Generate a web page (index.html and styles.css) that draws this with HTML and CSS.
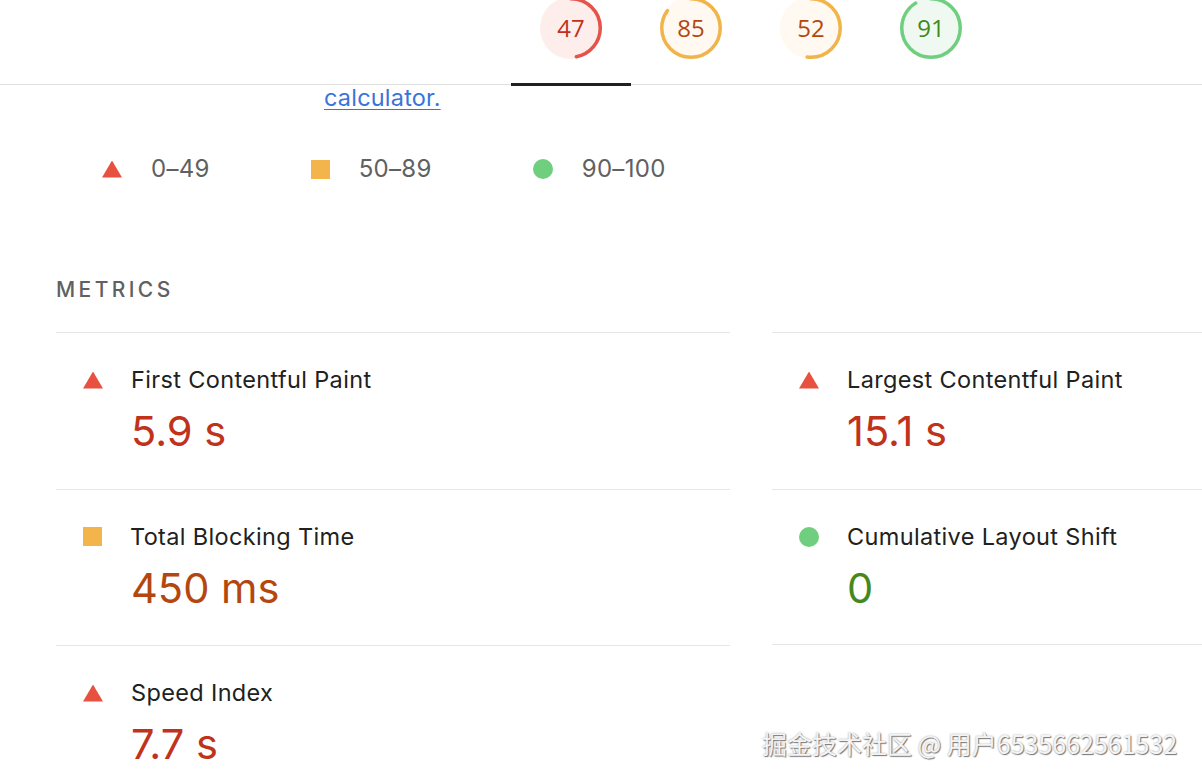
FILE: index.html
```html
<!DOCTYPE html>
<html lang="en">
<head>
<meta charset="utf-8">
<title>Lighthouse Report</title>
<link rel="stylesheet" href="styles.css">
</head>
<body>
<header class="topbar">
  <nav class="tabs">
    <a class="tab tab-active">
      <svg class="gauge gauge-fail" viewBox="0 0 62 62" width="62" height="62">
        <circle class="gauge-bg" cx="31" cy="31" r="31"/>
        <circle class="gauge-arc" cx="31" cy="31" r="29.25" style="stroke-dasharray: 86.4 183.8"/>
        <text class="gauge-num" x="31" y="39.5" text-anchor="middle">47</text>
      </svg>
    </a>
    <a class="tab">
      <svg class="gauge gauge-avg" viewBox="0 0 62 62" width="62" height="62">
        <circle class="gauge-bg" cx="31" cy="31" r="31"/>
        <circle class="gauge-arc" cx="31" cy="31" r="29.25" style="stroke-dasharray: 156.2 183.8"/>
        <text class="gauge-num" x="31" y="39.5" text-anchor="middle">85</text>
      </svg>
    </a>
    <a class="tab">
      <svg class="gauge gauge-avg" viewBox="0 0 62 62" width="62" height="62">
        <circle class="gauge-bg" cx="31" cy="31" r="31"/>
        <circle class="gauge-arc" cx="31" cy="31" r="29.25" style="stroke-dasharray: 95.6 183.8"/>
        <text class="gauge-num" x="31" y="39.5" text-anchor="middle">52</text>
      </svg>
    </a>
    <a class="tab">
      <svg class="gauge gauge-pass" viewBox="0 0 62 62" width="62" height="62">
        <circle class="gauge-bg" cx="31" cy="31" r="31"/>
        <circle class="gauge-arc" cx="31" cy="31" r="29.25" style="stroke-dasharray: 167.3 183.8"/>
        <text class="gauge-num" x="31" y="39.5" text-anchor="middle">91</text>
      </svg>
    </a>
  </nav>
</header>

<main class="report">
  <p class="note"><a class="link" href="#">calculator.</a></p>

  <ul class="legend">
    <li class="legend-item"><span class="icon icon-fail"></span><span>0–49</span></li>
    <li class="legend-item"><span class="icon icon-avg"></span><span>50–89</span></li>
    <li class="legend-item"><span class="icon icon-pass"></span><span>90–100</span></li>
  </ul>

  <h2 class="section-title">Metrics</h2>

  <div class="metrics">
    <div class="metric">
      <div class="metric-head"><span class="icon icon-fail"></span><span class="metric-title">First Contentful Paint</span></div>
      <div class="metric-value val-fail">5.9 s</div>
    </div>
    <div class="metric">
      <div class="metric-head"><span class="icon icon-fail"></span><span class="metric-title">Largest Contentful Paint</span></div>
      <div class="metric-value val-fail">15.1 s</div>
    </div>
    <div class="metric">
      <div class="metric-head"><span class="icon icon-avg"></span><span class="metric-title">Total Blocking Time</span></div>
      <div class="metric-value val-avg">450 ms</div>
    </div>
    <div class="metric metric-last">
      <div class="metric-head"><span class="icon icon-pass"></span><span class="metric-title">Cumulative Layout Shift</span></div>
      <div class="metric-value val-pass">0</div>
    </div>
    <div class="metric">
      <div class="metric-head"><span class="icon icon-fail"></span><span class="metric-title">Speed Index</span></div>
      <div class="metric-value val-fail">7.7 s</div>
    </div>
  </div>
</main>

<div class="watermark">掘金技术社区 @ 用户6535662561532</div>
</body>
</html>
```

FILE: styles.css
```css
* { box-sizing: border-box; }

html, body {
  margin: 0;
  padding: 0;
  width: 1202px;
  height: 780px;
  overflow: hidden;
  background: #ffffff;
  font-family: "Inter", "Liberation Sans", "Noto Sans", sans-serif;
  color: #212121;
}

.topbar {
  height: 85px;
  border-bottom: 1px solid #e0e0e0;
  background: #fff;
}

.tabs {
  display: flex;
  padding-left: 511px;
  height: 84px;
}

.tab {
  position: relative;
  width: 120px;
  display: flex;
  justify-content: center;
  align-items: flex-start;
}

.tab-active::after {
  content: "";
  position: absolute;
  left: 0;
  right: 0;
  bottom: -2px;
  height: 3px;
  background: #202124;
}

.gauge {
  margin-top: -3px;
  display: block;
}

.gauge-arc {
  fill: none;
  stroke-width: 3.5;
  stroke-linecap: round;
  transform: rotate(-90deg);
  transform-origin: 31px 31px;
}

.gauge-num {
  font-family: "Open Sans", "Inter", sans-serif;
  font-size: 24px;
}

.gauge-fail .gauge-bg { fill: #fdeeec; }
.gauge-fail .gauge-arc { stroke: #e5534a; }
.gauge-fail .gauge-num { fill: #bf311c; }

.gauge-avg .gauge-bg { fill: #fff9f1; }
.gauge-avg .gauge-arc { stroke: #f0b44b; }
.gauge-avg .gauge-num { fill: #b4470f; }

.gauge-pass .gauge-bg { fill: #eff9f1; }
.gauge-pass .gauge-arc { stroke: #6fcf7f; }
.gauge-pass .gauge-num { fill: #3e8a18; }

.report {
  padding: 0 0 0 56px;
}

.note {
  margin: 0;
  padding-left: 268px;
  font-size: 23.5px;
  letter-spacing: 0.2px;
  line-height: 26px;
}

.link {
  color: #3a74d9;
  text-decoration: underline;
  text-underline-offset: 3px;
  text-decoration-thickness: 1px;
}

.legend {
  list-style: none;
  margin: 44px 0 0 0;
  padding: 0 0 0 46px;
  display: flex;
  gap: 101px;
  font-size: 24px;
  letter-spacing: 0.3px;
  line-height: 28px;
  color: #616161;
}

.legend-item {
  display: flex;
  align-items: center;
  gap: 29px;
}

.icon {
  display: inline-block;
  width: 20px;
  height: 20px;
  flex: none;
}

.icon-fail {
  width: 20px;
  height: 17px;
  background: #e8513f;
  clip-path: polygon(50% 0, 100% 100%, 0 100%);
}

.icon-avg {
  width: 19px;
  height: 19px;
  background: #f2b44b;
}

.icon-pass {
  border-radius: 50%;
  background: #6fcf7f;
}

.section-title {
  margin: 94px 0 0 0;
  font-size: 21px;
  font-weight: 500;
  letter-spacing: 3.4px;
  text-transform: uppercase;
  color: #616161;
  line-height: 26px;
}

.metrics {
  margin-top: 29px;
  display: grid;
  grid-template-columns: 674px 674px;
  column-gap: 42px;
}

.metric {
  border-top: 1px solid #e6e6e6;
  height: 156.5px;
  padding: 36px 0 0 27px;
}

.metric-last {
  border-bottom: 1px solid #e6e6e6;
  height: 156px;
}

.metric-head {
  display: flex;
  align-items: center;
  gap: 28px;
  height: 22px;
}

.metric-title {
  font-size: 23.5px;
  letter-spacing: 0.35px;
  line-height: 22px;
  color: #212121;
}

.metric-value {
  margin-top: 15px;
  padding-left: 48px;
  font-size: 41.6px;
  line-height: 50px;
}

.val-fail { color: #c0321b; }
.val-avg { color: #b4470f; }
.val-pass { color: #45891a; }

.watermark {
  position: absolute;
  left: 762px;
  top: 727px;
  font-family: "Noto Sans CJK SC", "Liberation Sans", sans-serif;
  font-size: 25px;
  line-height: 32px;
  color: #f4f4f4;
  text-shadow: 1px 1px 1px #777, 0 0 2px rgba(0,0,0,0.35);
  white-space: nowrap;
}
```
